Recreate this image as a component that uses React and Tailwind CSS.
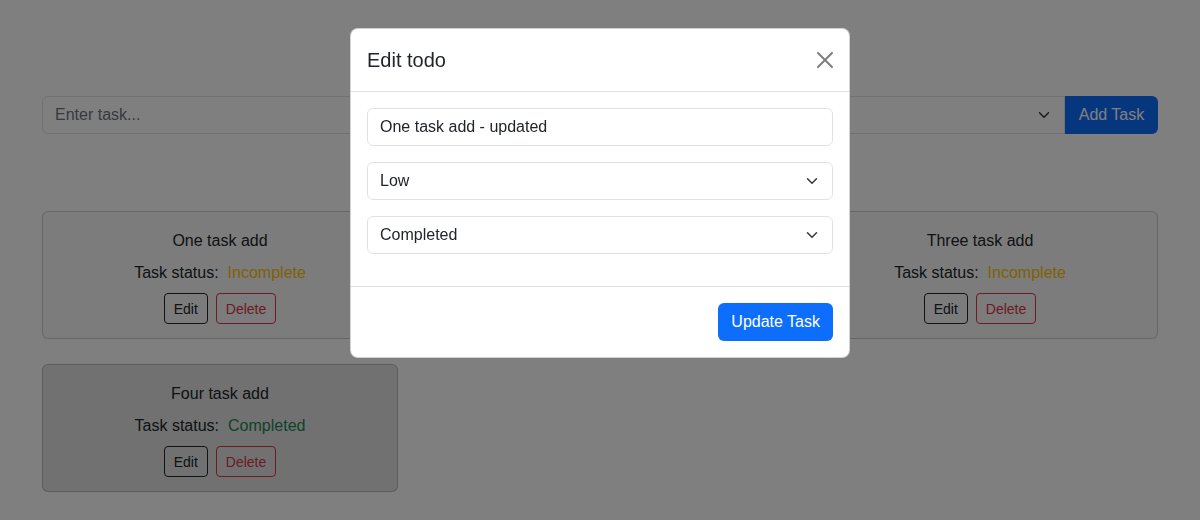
import React from "react";

const tasks = [
  { title: "One task add", status: "Incomplete" },
  { title: "Two task add", status: "Incomplete" },
  { title: "Three task add", status: "Incomplete" },
  { title: "Four task add", status: "Completed" },
];

const Chevron = () => (
  <svg width="16" height="12" viewBox="0 0 16 16" fill="none" className="shrink-0">
    <path d="m2 5 6 6 6-6" stroke="#343a40" strokeWidth="2" strokeLinecap="round" strokeLinejoin="round" />
  </svg>
);

const TaskCard = ({ task }) => {
  const done = task.status === "Completed";
  return (
    <div
      className={`h-[128px] rounded-[6px] border border-black/[.175] pt-[17px] flex flex-col items-center text-[16px] leading-6 text-[#212529] ${
        done ? "bg-[#e2e3e5]" : "bg-[#f8f9fa]"
      }`}
    >
      <div className="mb-2">{task.title}</div>
      <div className="mb-2 flex gap-[9px]">
        <span>Task status:</span>
        <span className={done ? "text-[#198754]" : "text-[#ffc107]"}>{task.status}</span>
      </div>
      <div className="flex gap-2">
        <button className="h-[31px] px-[9px] text-[14px] rounded-[4px] border border-[#212529] text-[#212529]">
          Edit
        </button>
        <button className="h-[31px] px-[9px] text-[14px] rounded-[4px] border border-[#dc3545] text-[#dc3545]">
          Delete
        </button>
      </div>
    </div>
  );
};

const App = () => {
  return (
    <div className="min-h-[520px] bg-white font-['Liberation_Sans',Arial,sans-serif] text-[#212529]">
      {/* Page behind the modal */}
      <div className="max-w-[1140px] mx-auto px-3">
        <h1 className="text-center text-[32px] font-medium leading-[48px] py-6">Todo App</h1>

        {/* Add task row */}
        <div className="flex h-[38px]">
          <input
            className="flex-1 min-w-0 border border-[#dee2e6] rounded-l-[6px] px-3 text-[16px] placeholder-[#6c757d] outline-none"
            placeholder="Enter task..."
          />
          <div className="flex-1 flex items-center justify-between border border-l-0 border-[#dee2e6] pl-3 pr-3 text-[16px]">
            <span>Low</span>
            <Chevron />
          </div>
          <button className="w-[93px] bg-[#0d6efd] text-white text-[16px] rounded-r-[6px]">Add Task</button>
        </div>

        <h2 className="text-center text-[24px] font-medium leading-[36px] mt-5 mb-[21px]">Tasks</h2>

        {/* Task cards */}
        <div className="grid grid-cols-3 gap-x-6 gap-y-[25px]">
          {tasks.map((t) => (
            <TaskCard key={t.title} task={t} />
          ))}
        </div>
      </div>

      {/* Backdrop + modal */}
      <div className="fixed inset-0 bg-black/50 flex justify-center items-start pt-[28px]">
        <div className="w-[500px] bg-white rounded-[8px] border border-black/[.175] overflow-hidden">
          <div className="h-[63px] flex items-center justify-between px-4 border-b border-[#dee2e6]">
            <h5 className="text-[20px] font-medium leading-[30px]">Edit todo</h5>
            <button className="w-4 h-4 flex items-center justify-center opacity-50">
              <svg width="16" height="16" viewBox="0 0 16 16">
                <path
                  fill="#000"
                  d="M.293.293a1 1 0 0 1 1.414 0L8 6.586 14.293.293a1 1 0 1 1 1.414 1.414L9.414 8l6.293 6.293a1 1 0 0 1-1.414 1.414L8 9.414l-6.293 6.293a1 1 0 0 1-1.414-1.414L6.586 8 .293 1.707a1 1 0 0 1 0-1.414z"
                />
              </svg>
            </button>
          </div>

          <div className="p-4 flex flex-col gap-4">
            <input
              className="h-[38px] border border-[#dee2e6] rounded-[6px] px-3 text-[16px] text-[#212529] outline-none"
              defaultValue="One task add - updated"
            />
            <div className="h-[38px] border border-[#dee2e6] rounded-[6px] px-3 flex items-center justify-between text-[16px]">
              <span>Low</span>
              <Chevron />
            </div>
            <div className="h-[38px] border border-[#dee2e6] rounded-[6px] px-3 flex items-center justify-between text-[16px] mb-4">
              <span>Completed</span>
              <Chevron />
            </div>
          </div>

          <div className="border-t border-[#dee2e6] p-4 flex justify-end">
            <button className="h-[38px] px-[13px] bg-[#0d6efd] text-white text-[16px] rounded-[6px]">Update Task</button>
          </div>
        </div>
      </div>
    </div>
  );
};

export default App;
